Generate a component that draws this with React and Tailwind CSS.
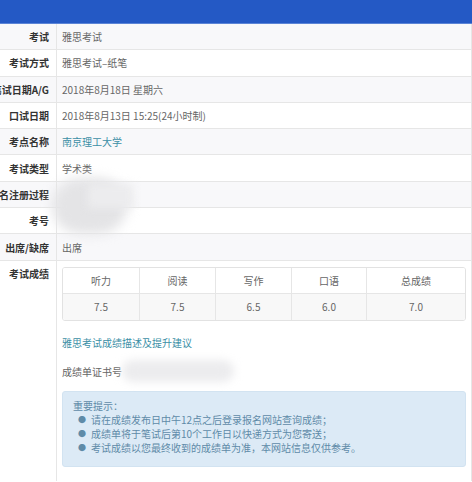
export default function App() {
  const rows = [
    { label: "考试", value: "雅思考试" },
    { label: "考试方式", value: "雅思考试–纸笔" },
    { label: "笔试日期A/G", value: "2018年8月18日 星期六" },
    { label: "口试日期", value: "2018年8月13日 15:25(24小时制)" },
    { label: "考点名称", value: "南京理工大学", link: true },
    { label: "考试类型", value: "学术类" },
    { label: "报名注册过程", value: "" },
    { label: "考号", value: "" },
    { label: "出席/缺席", value: "出席" },
  ];

  const scores = [
    ["听力", "7.5"],
    ["阅读", "7.5"],
    ["写作", "6.5"],
    ["口语", "6.0"],
    ["总成绩", "7.0"],
  ];

  const tips = [
    "请在成绩发布日中午12点之后登录报名网站查询成绩；",
    "成绩单将于笔试后第10个工作日以快递方式为您寄送；",
    "考试成绩以您最终收到的成绩单为准，本网站信息仅供参考。",
  ];

  return (
    <div
      className="relative w-[472px] h-[482px] overflow-hidden bg-white text-[10px] text-[#666]"
      style={{ fontFamily: '"Noto Sans CJK SC", "Noto Sans", sans-serif' }}
    >
      <div className="h-[24px] bg-[#2459c5] border-b border-[#5b84d6]"></div>

      <div className="border-r border-[#e6e6e6]">
        {rows.map((r, i) => (
          <div
            key={r.label}
            className={`flex h-[26.3px] border-b border-[#e6e6e6] ${i % 2 === 0 ? "bg-[#f8f8fa]" : "bg-white"}`}
          >
            <div className="w-[57px] shrink-0 flex items-center justify-end pr-[7px] border-r border-[#e6e6e6] whitespace-nowrap font-bold text-[#333]">
              {r.label}
            </div>
            <div className={`flex items-center pl-[5px] ${r.link ? "text-[#3c8fa6]" : ""}`}>{r.value}</div>
          </div>
        ))}

        <div className="flex h-[220px]">
          <div className="w-[57px] shrink-0 flex justify-end pt-[5px] pr-[7px] border-r border-[#e6e6e6] whitespace-nowrap font-bold text-[#333]">
            考试成绩
          </div>
          <div className="flex-1 pl-[5px] pr-[5px] pt-[6px]">
            <div className="border border-[#e2e2e2] rounded-[3px] overflow-hidden">
              <div className="grid grid-cols-[77px_76px_76px_75px_1fr] h-[26px] bg-white border-b border-[#e6e6e6]">
                {scores.map((s, i) => (
                  <div key={s[0]} className={`flex items-center justify-center ${i < 4 ? "border-r border-[#e6e6e6]" : ""}`}>
                    {s[0]}
                  </div>
                ))}
              </div>
              <div className="grid grid-cols-[77px_76px_76px_75px_1fr] h-[26px] bg-[#f8f8f8]">
                {scores.map((s, i) => (
                  <div key={s[0]} className={`flex items-center justify-center ${i < 4 ? "border-r border-[#e6e6e6]" : ""}`}>
                    {s[1]}
                  </div>
                ))}
              </div>
            </div>

            <div className="mt-[14px] text-[#3c8fa6]">雅思考试成绩描述及提升建议</div>
            <div className="mt-[14px]">成绩单证书号</div>

            <div className="mt-[12px] h-[76px] rounded-[3px] bg-[#dceaf6] border border-[#d2e3f1] pl-[10px] pt-[7px] text-[#5f8ba8] leading-[14px]">
              <div>重要提示：</div>
              {tips.map((t) => (
                <div key={t} className="flex items-center">
                  <span className="w-[18px] pl-[5px] text-[8px]">●</span>
                  <span>{t}</span>
                </div>
              ))}
            </div>
          </div>
        </div>
      </div>

      <div className="absolute left-[52px] top-[178px] w-[75px] h-[56px] rounded-full bg-[#e4e4e6] blur-[6px]"></div>
      <div className="absolute left-[88px] top-[184px] w-[45px] h-[24px] bg-[#ececee] blur-[4px]"></div>
      <div className="absolute left-[122px] top-[360px] w-[112px] h-[22px] rounded-full bg-[#ececee] blur-[4px]"></div>
    </div>
  );
}
